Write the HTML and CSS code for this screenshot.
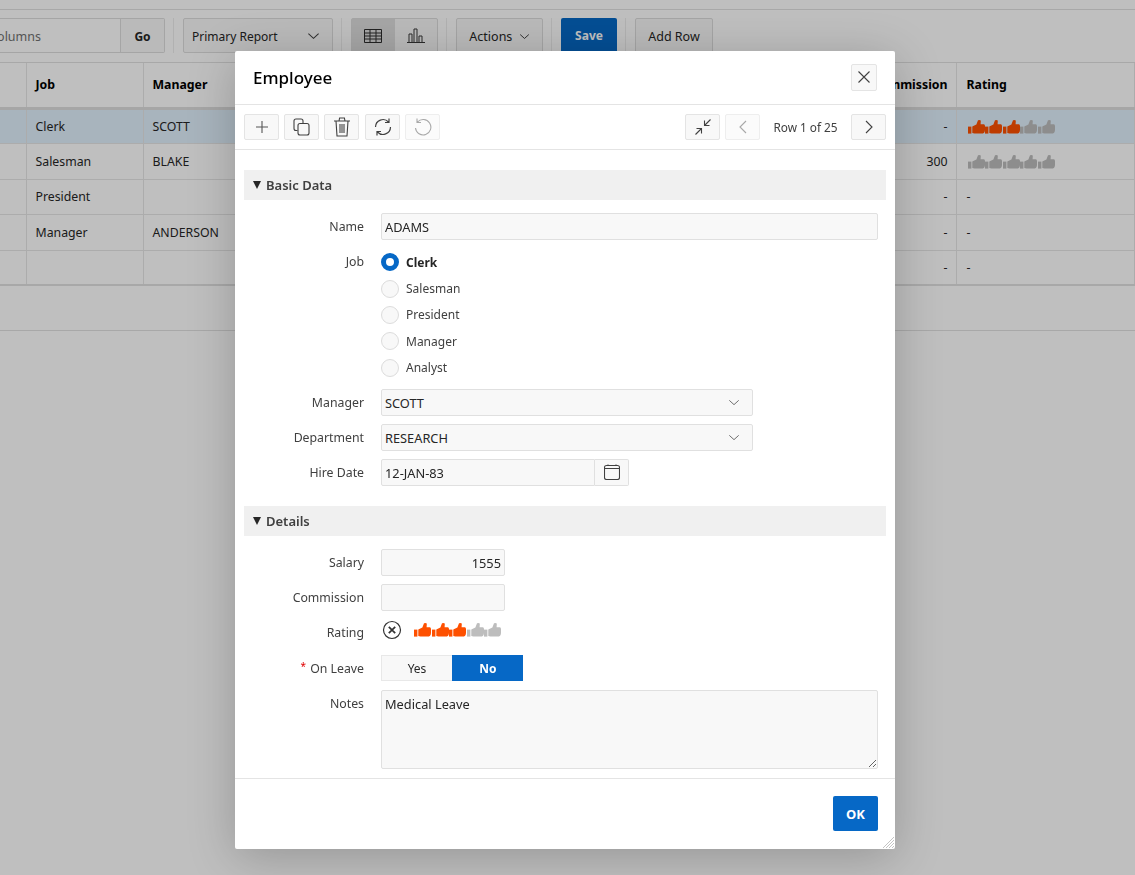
FILE: index.html
```html
<!DOCTYPE html>
<html lang="en">
<head>
    <meta charset="UTF-8">
    <meta name="viewport" content="width=device-width, initial-scale=1.0">
    <title>Employee</title>
    <link rel="stylesheet" href="styles.css">
</head>
<body>
    <svg class="sprite" width="0" height="0">
        <symbol id="thumb" viewBox="0 0 17.6 14">
            <rect x="0" y="6.6" width="3.4" height="7"/>
            <path d="M4.3 6.5 L8.4 4.4 L10 .3 L12.2 0 L12.8 1 L12.6 4.2 L15.8 4.2 Q17 4.4 17 6 L17 10 Q17 13.6 13.4 13.6 L6.4 13.6 L4.3 13 Z"/>
        </symbol>
        <symbol id="chevron-down" viewBox="0 0 14 8">
            <path d="M1.5 1.5 L7 6.5 L12.5 1.5" fill="none" stroke="currentColor" stroke-width="1.1"/>
        </symbol>
    </svg>

    <div class="page">
        <div class="top-strip"></div>
        <div class="toolbar">
            <div class="search"><span class="search-text">Search: All Text Columns</span><span class="go">Go</span></div>
            <span class="sep"></span>
            <div class="report">Primary Report
                <svg class="report-caret"><use href="#chevron-down"/></svg>
            </div>
            <span class="sep"></span>
            <div class="view-group">
                <span class="view-btn view-btn-on">
                    <svg width="18" height="14" viewBox="0 0 18 14" fill="none" stroke="#2e2e2e"><path d="M.5 .5H17.5V13.5H.5Z M.5 4H17.5 M.5 7H17.5 M.5 10H17.5 M6 .5V13.5 M12 .5V13.5"/></svg>
                </span>
                <span class="view-btn">
                    <svg width="18" height="15" viewBox="0 0 18 15" fill="none" stroke="#3a3a3a"><path d="M0 14.5H18 M2 14V6H5V14 M7 14V1H10V14 M12 14V8H15V14"/></svg>
                </span>
            </div>
            <span class="sep"></span>
            <div class="tool-btn actions">Actions
                <svg class="actions-caret"><use href="#chevron-down"/></svg>
            </div>
            <span class="sep"></span>
            <div class="save-btn">Save</div>
            <span class="sep"></span>
            <div class="tool-btn add-row">Add Row</div>
        </div>

        <table class="grid">
            <colgroup>
                <col class="col-a"><col class="col-job"><col class="col-mgr"><col class="col-mid"><col class="col-comm"><col>
            </colgroup>
            <thead>
                <tr><th></th><th>Job</th><th>Manager</th><th></th><th class="num">Commission</th><th>Rating</th></tr>
            </thead>
            <tbody>
                <tr class="selected">
                    <td></td><td>Clerk</td><td>SCOTT</td><td></td><td class="num">-</td>
                    <td><span class="thumbs">
                        <svg class="thumb on"><use href="#thumb"/></svg><svg class="thumb on"><use href="#thumb"/></svg><svg class="thumb on"><use href="#thumb"/></svg><svg class="thumb"><use href="#thumb"/></svg><svg class="thumb"><use href="#thumb"/></svg>
                    </span></td>
                </tr>
                <tr>
                    <td></td><td>Salesman</td><td>BLAKE</td><td></td><td class="num">300</td>
                    <td><span class="thumbs">
                        <svg class="thumb"><use href="#thumb"/></svg><svg class="thumb"><use href="#thumb"/></svg><svg class="thumb"><use href="#thumb"/></svg><svg class="thumb"><use href="#thumb"/></svg><svg class="thumb"><use href="#thumb"/></svg>
                    </span></td>
                </tr>
                <tr><td></td><td>President</td><td></td><td></td><td class="num">-</td><td>-</td></tr>
                <tr><td></td><td>Manager</td><td>ANDERSON</td><td></td><td class="num">-</td><td>-</td></tr>
                <tr><td></td><td></td><td></td><td></td><td class="num">-</td><td>-</td></tr>
            </tbody>
        </table>
        <div class="grid-footer"></div>
    </div>

    <div class="overlay"></div>

    <div class="dialog">
        <div class="dialog-head">
            <h1>Employee</h1>
            <button class="icon-btn close-btn" type="button">
                <svg width="14" height="14" viewBox="0 0 14 14" fill="none" stroke="#404040" stroke-width="1.1"><path d="M1.5 1.5 L12.5 12.5 M12.5 1.5 L1.5 12.5"/></svg>
            </button>
        </div>

        <div class="dialog-tools">
            <button class="icon-btn" type="button">
                <svg width="14" height="14" viewBox="0 0 14 14" fill="none" stroke="#555" stroke-width="1.1"><path d="M7 1V13 M1 7H13"/></svg>
            </button>
            <button class="icon-btn" type="button">
                <svg width="17" height="18" viewBox="0 0 17 18" fill="none" stroke="#404040" stroke-width="1.1"><path d="M4.5 12.5H3Q1 12.5 1 10.5V3Q1 1 3 1H8Q10 1 10 3V5"/><rect x="5" y="5.5" width="11" height="11.5" rx="2"/></svg>
            </button>
            <button class="icon-btn" type="button">
                <svg width="16" height="20" viewBox="0 0 16 20" fill="none" stroke="#404040" stroke-width="1.1"><path d="M0 4H16 M5 4L5.6 1H10.4L11 4 M2 4L3 19H13L14 4 M6 7V16 M8 7V16 M10 7V16"/></svg>
            </button>
            <button class="icon-btn refresh-btn" type="button">
                <svg width="18" height="18" viewBox="0 0 18 18" fill="none" stroke="#404040" stroke-width="1.2"><path d="M1.5 9A7.5 7.5 0 0 1 14.5 4 M16.5 9A7.5 7.5 0 0 1 3.5 14 M15 .5V4.5H11 M3 17.5V13.5H7"/></svg>
            </button>
            <button class="icon-btn is-off" type="button">
                <svg width="18" height="18" viewBox="0 0 18 18" fill="none" stroke="#a8a8a8" stroke-width="1.1"><path d="M3.5 4A7.7 7.7 0 1 1 1.5 10 M3 .5V4.5H7"/></svg>
            </button>
            <span class="tools-gap"></span>
            <button class="icon-btn" type="button">
                <svg width="18" height="18" viewBox="0 0 18 18" fill="none" stroke="#404040" stroke-width="1.1"><path d="M16.5 1.5L10.5 7.5 M10.5 2.5V7.5H15.5 M1.5 16.5L7.5 10.5 M2.5 10.5H7.5V15.5"/></svg>
            </button>
            <button class="icon-btn is-off" type="button">
                <svg width="8" height="14" viewBox="0 0 8 14" fill="none" stroke="#a8a8a8" stroke-width="1.1"><path d="M7 1L1 7L7 13"/></svg>
            </button>
            <span class="row-count">Row 1 of 25</span>
            <button class="icon-btn" type="button">
                <svg width="8" height="14" viewBox="0 0 8 14" fill="none" stroke="#404040" stroke-width="1.1"><path d="M1 1L7 7L1 13"/></svg>
            </button>
        </div>

        <div class="dialog-body">
            <div class="region-head"><span class="tri"></span>Basic Data</div>
            <div class="region">
                <div class="form-row">
                    <label class="form-label">Name</label>
                    <input class="text-field wide" type="text" value="ADAMS">
                </div>
                <div class="form-row">
                    <label class="form-label">Job</label>
                    <div class="radios">
                        <label class="radio is-on"><input type="radio" name="job" checked>Clerk</label>
                        <label class="radio"><input type="radio" name="job">Salesman</label>
                        <label class="radio"><input type="radio" name="job">President</label>
                        <label class="radio"><input type="radio" name="job">Manager</label>
                        <label class="radio"><input type="radio" name="job">Analyst</label>
                    </div>
                </div>
                <div class="form-row">
                    <label class="form-label">Manager</label>
                    <div class="select-field">SCOTT<svg class="select-caret"><use href="#chevron-down"/></svg></div>
                </div>
                <div class="form-row">
                    <label class="form-label">Department</label>
                    <div class="select-field">RESEARCH<svg class="select-caret"><use href="#chevron-down"/></svg></div>
                </div>
                <div class="form-row">
                    <label class="form-label">Hire Date</label>
                    <div class="date-field">
                        <input class="text-field date-input" type="text" value="12-JAN-83">
                        <span class="date-btn">
                            <svg width="16" height="16" viewBox="0 0 16 16" fill="none" stroke="#404040" stroke-width="1.1"><rect x=".5" y="1.5" width="15" height="14" rx="2"/><path d="M.5 4.5H15.5 M4 .5V2 M12 .5V2"/></svg>
                        </span>
                    </div>
                </div>
            </div>

            <div class="region-head"><span class="tri"></span>Details</div>
            <div class="region">
                <div class="form-row">
                    <label class="form-label">Salary</label>
                    <input class="text-field short num-input" type="text" value="1555">
                </div>
                <div class="form-row">
                    <label class="form-label">Commission</label>
                    <input class="text-field short" type="text">
                </div>
                <div class="form-row rating-row">
                    <label class="form-label">Rating</label>
                    <div class="rating">
                        <svg class="clear-icon" width="20" height="20" viewBox="0 0 20 20" fill="none" stroke="#333"><circle cx="10" cy="10" r="8.5" stroke-width="1.2"/><path d="M6.8 6.8L13.2 13.2 M13.2 6.8L6.8 13.2" stroke-width="1.7"/></svg>
                        <span class="thumbs">
                            <svg class="thumb on"><use href="#thumb"/></svg><svg class="thumb on"><use href="#thumb"/></svg><svg class="thumb on"><use href="#thumb"/></svg><svg class="thumb"><use href="#thumb"/></svg><svg class="thumb"><use href="#thumb"/></svg>
                        </span>
                    </div>
                </div>
                <div class="form-row">
                    <label class="form-label"><span class="req">*</span>On Leave</label>
                    <div class="yes-no">
                        <span class="yn">Yes</span>
                        <span class="yn yn-on">No</span>
                    </div>
                </div>
                <div class="form-row">
                    <label class="form-label">Notes</label>
                    <textarea class="text-field wide notes">Medical Leave</textarea>
                </div>
            </div>
        </div>

        <div class="dialog-foot">
            <button class="ok-btn" type="button">OK</button>
        </div>

        <svg class="grip" width="11" height="11" viewBox="0 0 11 11" stroke="#c4c4c4"><path d="M0 11L11 0 M3 11L11 3 M6 11L11 6 M9 11L11 9"/></svg>
    </div>
</body>
</html>
```

FILE: styles.css
```css
* {
    box-sizing: border-box;
}

html, body {
    height: 100%;
}

body {
    margin: 0;
    font-family: "Noto Sans", "Open Sans", sans-serif;
    font-size: 12px;
    color: #262626;
    background-color: #fff;
    overflow: hidden;
}

.sprite {
    display: block;
    height: 0;
}

/* page behind the dialog */
.top-strip {
    height: 10px;
    border-bottom: 1px solid #e0e0e0;
}

.toolbar {
    display: flex;
    align-items: center;
    height: 53px;
    padding-bottom: 1px;
    border-bottom: 1px solid #e0e0e0;
    background-color: #fff;
}

.search {
    display: flex;
    width: 165px;
    height: 35px;
    flex: none;
    background-color: #fff;
    border: 1px solid #dcdcdc;
    border-left: none;
    border-radius: 0 2px 2px 0;
}

.search-text {
    flex: 1;
    display: flex;
    justify-content: flex-end;
    overflow: hidden;
    white-space: nowrap;
    line-height: 35px;
    padding-right: 79px;
    color: #707070;
    font-size: 12.5px;
}

.go {
    width: 44px;
    flex: none;
    text-align: center;
    line-height: 35px;
    font-weight: 700;
    background-color: #f8f8f8;
    border-left: 1px solid #dcdcdc;
}

.sep {
    flex: none;
    width: 1px;
    height: 35px;
    margin: 0 9px 0 8px;
    background-color: #ececec;
}

.report {
    position: relative;
    width: 150px;
    height: 35px;
    padding-left: 8px;
    line-height: 35px;
    background-color: #f8f8f8;
    border: 1px solid #dcdcdc;
    border-radius: 2px;
}

.report-caret {
    position: absolute;
    right: 12px;
    top: 13px;
    width: 13px;
    height: 8px;
    color: #404040;
}

.view-group {
    display: flex;
    width: 87px;
    height: 35px;
    border: 1px solid #dcdcdc;
    border-radius: 2px;
    background-color: #f8f8f8;
}

.view-btn {
    display: flex;
    flex: 1;
    align-items: center;
    justify-content: center;
}

.view-btn-on {
    background-color: #dedede;
}

.tool-btn {
    height: 35px;
    line-height: 35px;
    text-align: center;
    font-size: 12.5px;
    background-color: #f8f8f8;
    border: 1px solid #dcdcdc;
    border-radius: 2px;
}

.actions {
    width: 87px;
}

.actions-caret {
    width: 11px;
    height: 7px;
    margin-left: 3px;
    vertical-align: 1px;
    color: #262626;
}

.add-row {
    width: 78px;
}

.save-btn {
    width: 56px;
    height: 35px;
    line-height: 35px;
    text-align: center;
    font-weight: 700;
    color: #fff;
    background-color: #0668c6;
    border-radius: 2px;
}

.grid {
    width: 100%;
    table-layout: fixed;
    border-collapse: collapse;
    font-size: 12.3px;
}

.col-a { width: 26px; }
.col-job { width: 117px; }
.col-mgr { width: 200px; }
.col-mid { width: 300px; }
.col-comm { width: 313px; }

.grid th {
    height: 45px;
    padding: 0 9px;
    text-align: left;
    font-weight: 700;
    color: #000;
    background-color: #fff;
    border-right: 1px solid #e6e6e6;
    border-bottom: 3px solid #dedede;
}

.grid td {
    height: 35.5px;
    padding: 0 9px;
    border-right: 1px solid #e6e6e6;
    border-bottom: 1px solid #e6e6e6;
}

.grid th:last-child,
.grid td:last-child {
    padding-left: 10px;
}

.grid th.num,
.grid td.num {
    padding-right: 8px;
    text-align: right;
}

.selected td {
    background-color: #e1f0fc;
}

.grid tr:last-child td {
    height: 34.5px;
    border-bottom: 2px solid #e0e0e0;
}

.grid .thumbs {
    margin-left: 1px;
}

.grid-footer {
    height: 45px;
    border-bottom: 1px solid #e0e0e0;
}

.thumbs {
    display: inline-flex;
    vertical-align: middle;
}

.thumb {
    display: block;
    width: 17.6px;
    height: 14px;
    fill: #bdbdbd;
}

.thumb.on {
    fill: #fe5000;
}

.overlay {
    position: fixed;
    inset: 0;
    background-color: rgba(0, 0, 0, 0.25);
}

/* dialog */
.dialog {
    position: absolute;
    left: 235px;
    top: 51px;
    display: flex;
    flex-direction: column;
    width: 660px;
    height: 798px;
    background-color: #fff;
    border-radius: 2px;
    box-shadow: 0 8px 48px rgba(0, 0, 0, 0.22);
}

.dialog-head {
    display: flex;
    align-items: center;
    justify-content: space-between;
    flex: none;
    height: 54px;
    padding: 0 18px;
    border-bottom: 1px solid #e4e4e4;
}

h1 {
    margin: 0;
    font-size: 17px;
    font-weight: 500;
    color: #000;
}

.icon-btn {
    display: flex;
    align-items: center;
    justify-content: center;
    flex: none;
    width: 35px;
    height: 26px;
    padding: 0;
    background-color: #f8f8f8;
    border: 1px solid #e4e4e4;
    border-radius: 2px;
}

.icon-btn.is-off {
    background-color: #fbfbfb;
    border-color: #eeeeee;
}

.refresh-btn {
    margin-left: 1px;
}

.close-btn {
    width: 26px;
    height: 27px;
    margin-top: -1px;
}

.dialog-tools {
    display: flex;
    align-items: center;
    flex: none;
    gap: 5px;
    height: 45px;
    padding: 0 9px;
    border-bottom: 1px solid #e4e4e4;
}

.tools-gap {
    flex: 1;
}

.row-count {
    width: 81px;
    text-align: center;
    font-size: 11.8px;
    white-space: nowrap;
    color: #404040;
}

.dialog-body {
    flex: 1;
    min-height: 0;
    overflow: hidden;
    padding: 20px 9px 0;
}

.region-head {
    display: flex;
    align-items: center;
    height: 30px;
    padding-left: 9px;
    margin-bottom: 13px;
    font-size: 13px;
    font-weight: 600;
    color: #404040;
    background-color: #f0f0f0;
}

.tri {
    width: 0;
    height: 0;
    margin-right: 5px;
    border-left: 4.5px solid transparent;
    border-right: 4.5px solid transparent;
    border-top: 8px solid #262626;
}

.region {
    padding-right: 8px;
    margin-bottom: 20px;
}

.form-row {
    display: flex;
    align-items: flex-start;
    margin-bottom: 8px;
}

.form-label {
    flex: none;
    width: 120px;
    height: 27px;
    margin-right: 17px;
    text-align: right;
    font-size: 12.3px;
    line-height: 28px;
    color: #404040;
}

.req {
    margin-right: 4px;
    font-size: 10px;
    line-height: 10px;
    vertical-align: 3px;
    color: #e00000;
}

.text-field {
    height: 27px;
    padding: 1px 3px 0;
    font-family: inherit;
    font-size: 12.8px;
    color: #262626;
    background-color: #f8f8f8;
    border: 1px solid #e0e0e0;
    border-radius: 2px;
    outline: none;
}

.wide {
    width: 497px;
}

.short {
    width: 124px;
}

.num-input {
    text-align: right;
}

.notes {
    display: block;
    height: 79px;
    padding-top: 4px;
    line-height: 18px;
}

.radios {
    padding-top: 1px;
}

.radio {
    display: flex;
    align-items: center;
    height: 26.4px;
    color: #404040;
}

.radio input {
    appearance: none;
    width: 18px;
    height: 18px;
    margin: 0 7px 0 0;
    background-color: #f8f8f8;
    border: 1px solid #dcdcdc;
    border-radius: 50%;
}

.radio input:checked {
    background-color: #fff;
    border: 5px solid #0668c6;
}

.radio.is-on {
    font-weight: 700;
    color: #262626;
}

.select-field {
    position: relative;
    width: 372px;
    height: 27px;
    padding-left: 3px;
    font-size: 12.8px;
    line-height: 26px;
    background-color: #f8f8f8;
    border: 1px solid #e0e0e0;
    border-radius: 2px;
}

.select-caret {
    position: absolute;
    right: 12px;
    top: 9px;
    width: 12px;
    height: 7px;
    color: #666;
}

.date-field {
    display: flex;
}

.date-input {
    width: 214px;
    border-radius: 2px 0 0 2px;
}

.date-btn {
    display: flex;
    align-items: center;
    justify-content: center;
    width: 34px;
    height: 27px;
    background-color: #f8f8f8;
    border: 1px solid #e0e0e0;
    border-left: none;
    border-radius: 0 2px 2px 0;
}

.rating-row {
    height: 28px;
}

.rating {
    display: flex;
    align-items: center;
    height: 23px;
}

.clear-icon {
    margin: 0 12px 0 1px;
}

.yes-no {
    display: flex;
    width: 142px;
    height: 26px;
}

.yn {
    flex: 1;
    line-height: 25px;
    text-align: center;
    background-color: #f8f8f8;
    border: 1px solid #e8e8e8;
    border-right: none;
}

.yn-on {
    font-weight: 700;
    color: #fff;
    background-color: #0668c6;
    border-color: #0668c6;
}

.dialog-foot {
    display: flex;
    justify-content: flex-end;
    flex: none;
    height: 71px;
    padding: 17px 17px 0;
    border-top: 1px solid #e4e4e4;
}

.ok-btn {
    width: 45px;
    height: 35px;
    padding: 0;
    font-family: inherit;
    font-size: 13px;
    font-weight: 700;
    color: #fff;
    background-color: #0668c6;
    border: none;
    border-radius: 2px;
}

.grip {
    position: absolute;
    right: 1px;
    bottom: 1px;
}
```
